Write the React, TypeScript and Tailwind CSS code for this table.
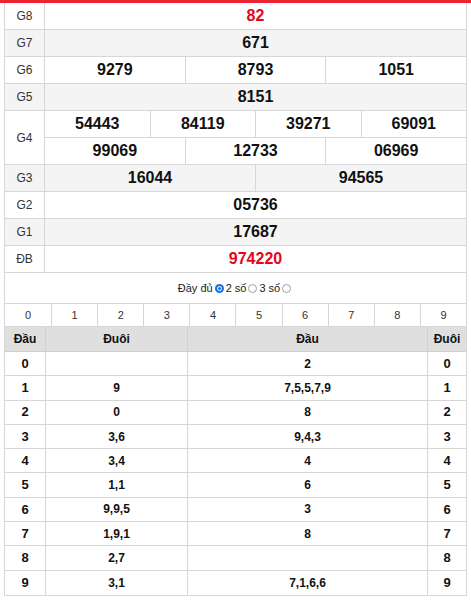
const G = "bg-[#f4f4f4]";

type Prize = { label: string; rows: string[][]; bg: boolean; red?: boolean };

const prizes: Prize[] = [
  { label: "G8", rows: [["82"]], bg: false, red: true },
  { label: "G7", rows: [["671"]], bg: true },
  { label: "G6", rows: [["9279", "8793", "1051"]], bg: false },
  { label: "G5", rows: [["8151"]], bg: true },
  {
    label: "G4",
    rows: [
      ["54443", "84119", "39271", "69091"],
      ["99069", "12733", "06969"],
    ],
    bg: false,
  },
  { label: "G3", rows: [["16044", "94565"]], bg: true },
  { label: "G2", rows: [["05736"]], bg: false },
  { label: "G1", rows: [["17687"]], bg: true },
  { label: "ĐB", rows: [["974220"]], bg: false, red: true },
];

const loto: [string, string, string, string][] = [
  ["0", "", "2", "0"],
  ["1", "9", "7,5,5,7,9", "1"],
  ["2", "0", "8", "2"],
  ["3", "3,6", "9,4,3", "3"],
  ["4", "3,4", "4", "4"],
  ["5", "1,1", "6", "5"],
  ["6", "9,9,5", "3", "6"],
  ["7", "1,9,1", "8", "7"],
  ["8", "2,7", "", "8"],
  ["9", "3,1", "7,1,6,6", "9"],
];

function Radio({ checked }: { checked?: boolean }) {
  return checked ? (
    <span className="mx-[2px] inline-flex h-[9px] w-[9px] items-center justify-center rounded-full bg-[#1a73e8]">
      <span className="h-[5px] w-[5px] rounded-full border border-white bg-[#1a73e8]" />
    </span>
  ) : (
    <span className="mx-[2px] inline-block h-[9px] w-[9px] rounded-full border border-[#a0a0a0] bg-white" />
  );
}

export default function App() {
  return (
    <div
      className="w-[471px] bg-white text-[#111]"
      style={{ fontFamily: '"Liberation Sans", Arial, sans-serif' }}
    >
      <div className="h-[3px] bg-[#ec2330]" />
      <div className="mx-[4px] border-x border-b border-[#d7d7d7]">
        {/* prize table */}
        <div>
          {prizes.map((p) => (
            <div
              key={p.label}
              className={`flex border-b border-[#d7d7d7] ${p.bg ? G : "bg-white"}`}
            >
              <div className="flex w-[40px] shrink-0 items-center justify-center border-r border-[#d7d7d7] text-[12px] text-[#333]">
                {p.label}
              </div>
              <div className="flex flex-1 flex-col">
                {p.rows.map((r, i) => (
                  <div
                    key={i}
                    className={`flex h-[26px] box-content ${i > 0 ? "border-t border-[#d7d7d7]" : ""}`}
                  >
                    {r.map((v, j) => (
                      <div
                        key={j}
                        className={`flex flex-1 items-center justify-center text-[16px] font-bold ${
                          j > 0 ? "border-l border-[#d7d7d7]" : ""
                        } ${p.red ? "text-[#e5061b]" : "text-[#111]"}`}
                      >
                        {v}
                      </div>
                    ))}
                  </div>
                ))}
              </div>
            </div>
          ))}
        </div>

        {/* options */}
        <div className="flex h-[30px] items-center justify-center text-[11px] text-[#222]">
          <span>Đầy đủ</span>
          <Radio checked />
          <span>2 số</span>
          <Radio />
          <span>3 số</span>
          <Radio />
        </div>

        {/* digits */}
        <div className="grid h-[24px] grid-cols-10 border-y border-[#d7d7d7] text-[11px] text-[#333]">
          {Array.from({ length: 10 }, (_, i) => (
            <div
              key={i}
              className={`flex items-center justify-center ${i > 0 ? "border-l border-[#d7d7d7]" : ""}`}
            >
              {i}
            </div>
          ))}
        </div>

        {/* loto table */}
        <div className="grid grid-cols-[40px_142px_240px_1fr]">
          {["Đầu", "Đuôi", "Đầu", "Đuôi"].map((h, i) => (
            <div
              key={i}
              className={`flex h-[25px] items-center justify-center border-b border-[#d0d0d0] bg-[#dfdfdf] text-[12px] font-bold ${
                i > 0 ? "border-l" : ""
              }`}
            >
              {h}
            </div>
          ))}
          {loto.map((r, ri) =>
            r.map((c, ci) => (
              <div
                key={`${ri}-${ci}`}
                className={`flex h-[24.3px] items-center justify-center border-[#d7d7d7] font-bold ${
                  ri < loto.length - 1 ? "border-b" : ""
                } ${ci > 0 ? "border-l" : ""} ${ci === 0 || ci === 3 ? "text-[13px]" : "text-[12px]"}`}
              >
                {c}
              </div>
            ))
          )}
        </div>
      </div>
    </div>
  );
}
